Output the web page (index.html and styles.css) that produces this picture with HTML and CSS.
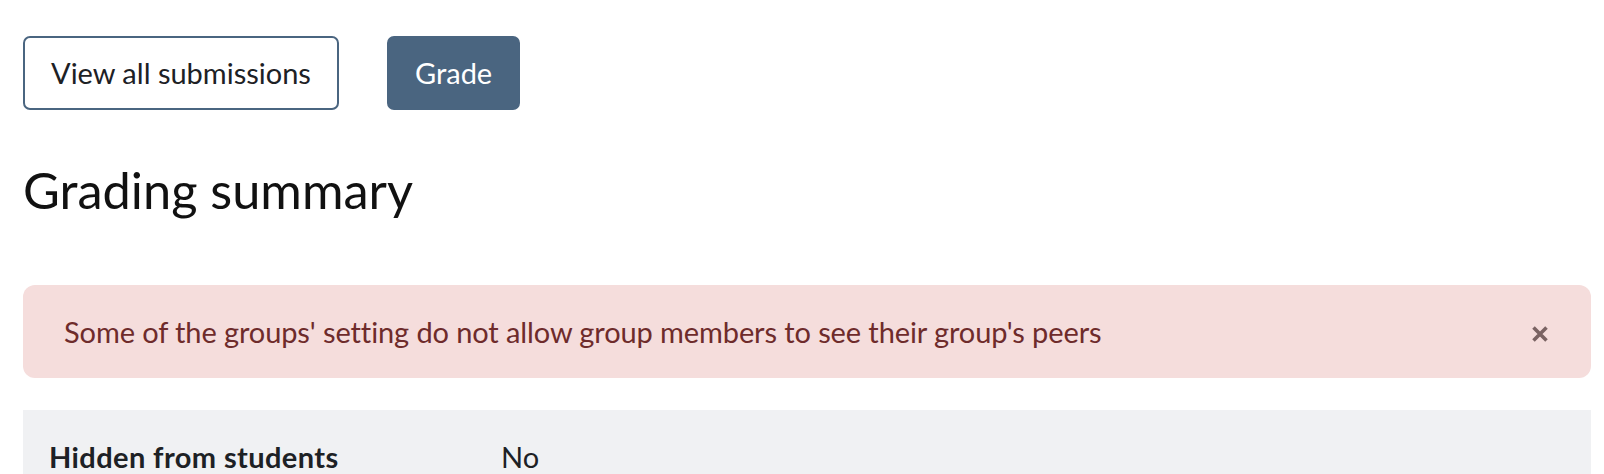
FILE: index.html
```html
<!DOCTYPE html>
<html lang="en">
<head>
  <meta charset="UTF-8" />
  <title>Grading summary</title>
  <link rel="stylesheet" href="styles.css">
</head>
<body>
  <div class="page">
    <div class="actions">
      <a class="btn btn-outline" href="#">View all submissions</a>
      <a class="btn btn-primary" href="#">Grade</a>
    </div>

    <h2>Grading summary</h2>

    <div class="alert">
      <span>Some of the groups' setting do not allow group members to see their group's peers</span>
      <button class="close" aria-label="Close">
        <svg width="20" height="20" viewBox="0 0 20 20"><path d="M3.5 3.5 L16.5 16.5 M16.5 3.5 L3.5 16.5" /></svg>
      </button>
    </div>

    <table class="summary">
      <tr>
        <th>Hidden from students</th>
        <td>No</td>
      </tr>
    </table>
  </div>
</body>
</html>
```
FILE: styles.css
```css
body {
  margin: 0;
  font-family: Lato, "Liberation Sans", sans-serif;
  font-size: 29px;
  line-height: 45px;
  color: #1d2125;
  background: #fff;
}

.page {
  padding: 36px 13px 0 23px;
}

.actions {
  display: flex;
  gap: 48px;
}

.btn {
  display: inline-block;
  padding: 12px 26px;
  line-height: 46px;
  border: 2px solid #4a6580;
  border-radius: 7px;
  text-decoration: none;
  color: #1d2125;
}

.btn-primary {
  background: #4a6580;
  color: #fff;
}

h2 {
  margin: 50px 0 65px;
  font-size: 50.5px;
  font-weight: 400;
  line-height: 60px;
  color: #111;
}

.alert {
  display: flex;
  align-items: center;
  justify-content: space-between;
  padding: 24px 41px 24px 41px;
  background: #f5dddc;
  color: #6e2b2b;
  border-radius: 12px;
  letter-spacing: -0.1px;
}

.close {
  background: none;
  border: none;
  padding: 0;
  display: flex;
  margin-top: 4px;
}

.close svg path {
  stroke: #7a6363;
  stroke-width: 3.6;
  fill: none;
}

.summary {
  width: 100%;
  margin-top: 32px;
  border-collapse: collapse;
  background: #f0f1f3;
}

.summary th,
.summary td {
  text-align: left;
  vertical-align: top;
  padding: 24px 26px;
}

.summary th {
  width: 400px;
  font-weight: 700;
  letter-spacing: 0.4px;
}
```
